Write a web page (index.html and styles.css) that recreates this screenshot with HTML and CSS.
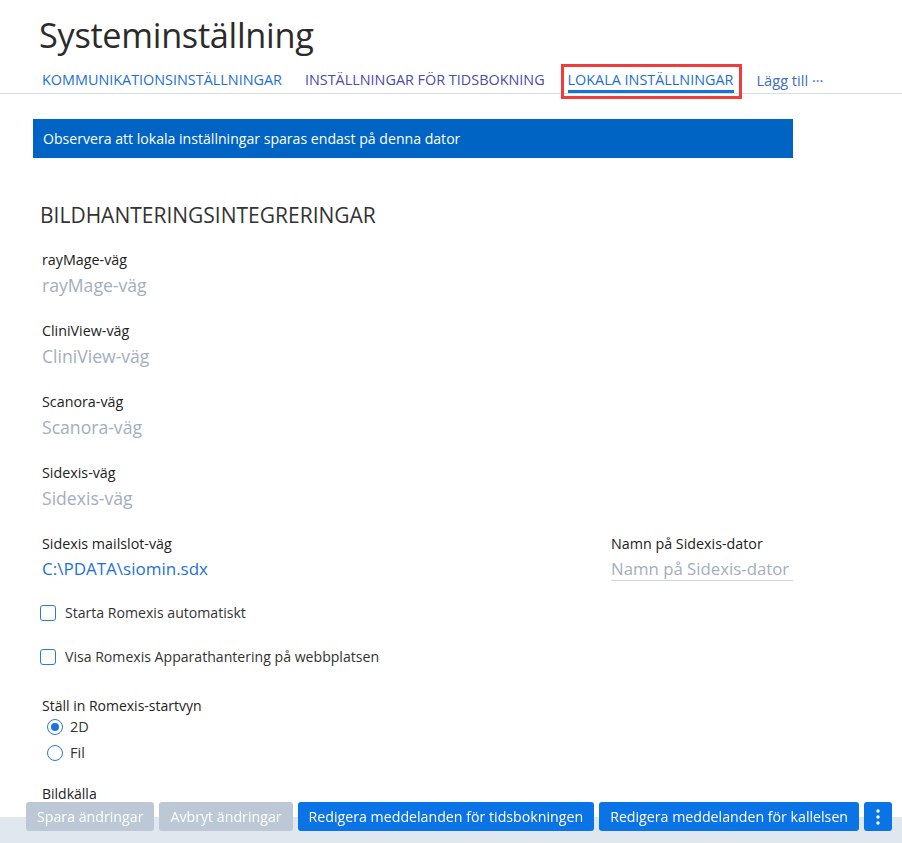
FILE: index.html
```html
<!DOCTYPE html>
<html lang="sv">
<head>
    <meta charset="UTF-8">
    <meta name="viewport" content="width=device-width, initial-scale=1.0">
    <title>Systeminställning</title>
    <link rel="stylesheet" href="styles.css">
</head>
<body>

<div class="page-header">
    <h1 class="page-title">Systeminställning</h1>
    <div class="tabs">
        <a class="tab">KOMMUNIKATIONSINSTÄLLNINGAR</a>
        <a class="tab tab-visited">INSTÄLLNINGAR FÖR TIDSBOKNING</a>
        <a class="tab tab-active">LOKALA INSTÄLLNINGAR</a>
        <a class="tab tab-add">Lägg till ···</a>
    </div>
</div>

<div class="content">
    <div class="notice">Observera att lokala inställningar sparas endast på denna dator</div>

    <h2 class="section-title">BILDHANTERINGSINTEGRERINGAR</h2>

    <div class="field">
        <div class="field-label">rayMage-väg</div>
        <div class="field-value placeholder">rayMage-väg</div>
    </div>
    <div class="field">
        <div class="field-label">CliniView-väg</div>
        <div class="field-value placeholder">CliniView-väg</div>
    </div>
    <div class="field">
        <div class="field-label">Scanora-väg</div>
        <div class="field-value placeholder">Scanora-väg</div>
    </div>
    <div class="field">
        <div class="field-label">Sidexis-väg</div>
        <div class="field-value placeholder">Sidexis-väg</div>
    </div>

    <div class="field-row">
        <div class="field">
            <div class="field-label">Sidexis mailslot-väg</div>
            <div class="field-value filled">C:\PDATA\siomin.sdx</div>
        </div>
        <div class="field field-right">
            <div class="field-label">Namn på Sidexis-dator</div>
            <div class="field-value placeholder underlined">Namn på Sidexis-dator</div>
        </div>
    </div>

    <label class="check">
        <span class="check-box"></span>
        Starta Romexis automatiskt
    </label>
    <label class="check">
        <span class="check-box"></span>
        Visa Romexis Apparathantering på webbplatsen
    </label>

    <div class="group-label group-first">Ställ in Romexis-startvyn</div>
    <label class="radio">
        <span class="radio-dot checked"></span>
        2D
    </label>
    <label class="radio">
        <span class="radio-dot"></span>
        Fil
    </label>

    <div class="group-label group-last">Bildkälla</div>
</div>

<div class="footer">
    <button class="btn btn-disabled">Spara ändringar</button>
    <button class="btn btn-disabled">Avbryt ändringar</button>
    <button class="btn">Redigera meddelanden för tidsbokningen</button>
    <button class="btn">Redigera meddelanden för kallelsen</button>
    <button class="btn btn-more">
        <svg width="4" height="16" viewBox="0 0 4 16">
            <circle cx="2" cy="2" r="1.7" fill="#fff"/>
            <circle cx="2" cy="8" r="1.7" fill="#fff"/>
            <circle cx="2" cy="14" r="1.7" fill="#fff"/>
        </svg>
    </button>
</div>

</body>
</html>
```

FILE: styles.css
```css
body {
    font-family: "Open Sans", "Noto Sans", Arial, sans-serif;
    margin: 0;
    padding: 0;
    background: #fff;
    color: #222;
}

.page-header {
    border-bottom: 1px solid #d6dde5;
}

.page-title {
    margin: 0;
    padding: 12px 0 0 39px;
    font-size: 34.3px;
    font-weight: 400;
    line-height: 46px;
    color: #2b2b2b;
    letter-spacing: -0.3px;
}

.tabs {
    display: flex;
    align-items: flex-end;
    gap: 23px;
    padding: 12px 0 0 42px;
}

.tab {
    position: relative;
    font-size: 14.4px;
    line-height: 20px;
    color: #1c6fd2;
    border-bottom: 3px solid transparent;
    cursor: pointer;
}

.tab-visited {
    color: #4a4ca8;
}

.tab-active {
    border-bottom-color: #1673d9;
}

/* red highlight frame around the active tab */
.tab-active::after {
    content: "";
    position: absolute;
    left: -7px;
    right: -8px;
    top: -6px;
    bottom: -9px;
    border: 3px solid #f23b3b;
}

.tab-add {
    font-size: 14.6px;
    color: #3d6cc6;
}

.content {
    padding: 25px 0 60px 33px;
}

.notice {
    width: 750px;
    background: #0064c4;
    color: #fff;
    font-size: 14.1px;
    line-height: 39px;
    padding-left: 10px;
}

.section-title {
    margin: 43px 0 21px 7px;
    font-size: 21px;
    font-weight: 400;
    line-height: 28px;
    color: #333;
}

.field {
    margin: 0 0 24px 9px;
}

.field-label {
    font-size: 14.3px;
    line-height: 20px;
    color: #222;
}

.field-value {
    margin-top: 3px;
    font-size: 17px;
    line-height: 24px;
    white-space: nowrap;
}

.placeholder {
    color: #a3aebd;
    font-size: 17.6px;
}

.filled {
    color: #1a72e0;
}

.field-row {
    display: flex;
    justify-content: space-between;
    width: 760px;
}

.field-right {
    width: 182px;
    margin-left: 0;
}

.underlined {
    border-bottom: 1px solid #cbd6e2;
    line-height: 22px;
    margin-top: 4px;
    font-size: 16.8px;
}

.check {
    display: flex;
    align-items: center;
    gap: 9px;
    margin: -3px 0 25px 7px;
    font-size: 14.1px;
    line-height: 22px;
    color: #333;
}

.check-box {
    width: 14px;
    height: 14px;
    border: 1.5px solid #2a78dc;
    border-radius: 3px;
}

.group-label {
    margin: 8px 0 0 9px;
    font-size: 14px;
    line-height: 20px;
    color: #222;
}

.group-first {
    margin-top: 30px;
    line-height: 16px;
}

.group-last {
    margin-top: 18px;
}

.radio {
    display: flex;
    align-items: center;
    gap: 7px;
    margin-left: 14px;
    font-size: 14.5px;
    line-height: 26px;
    color: #333;
}

.radio-dot {
    width: 14px;
    height: 14px;
    border: 1.5px solid #2a78dc;
    border-radius: 50%;
    position: relative;
}

.radio-dot.checked::after {
    content: "";
    position: absolute;
    left: 3px;
    top: 3px;
    width: 8px;
    height: 8px;
    border-radius: 50%;
    background: #1a72e0;
}

.footer {
    position: fixed;
    left: 0;
    right: 0;
    bottom: 0;
    height: 41px;
    background: linear-gradient(to bottom, transparent 15px, #e1e7ee 15px);
    display: flex;
    align-items: flex-start;
    gap: 5px;
    padding-left: 26px;
}

.btn {
    height: 29px;
    padding: 0 11px;
    border: none;
    border-radius: 3px;
    background: #0a73e6;
    color: #fff;
    font-family: inherit;
    font-size: 14.2px;
    cursor: pointer;
}

.btn-disabled {
    background: #bdc8d6;
}

.btn-more {
    width: 28px;
    padding: 0;
    display: flex;
    justify-content: center;
    align-items: center;
}
```
